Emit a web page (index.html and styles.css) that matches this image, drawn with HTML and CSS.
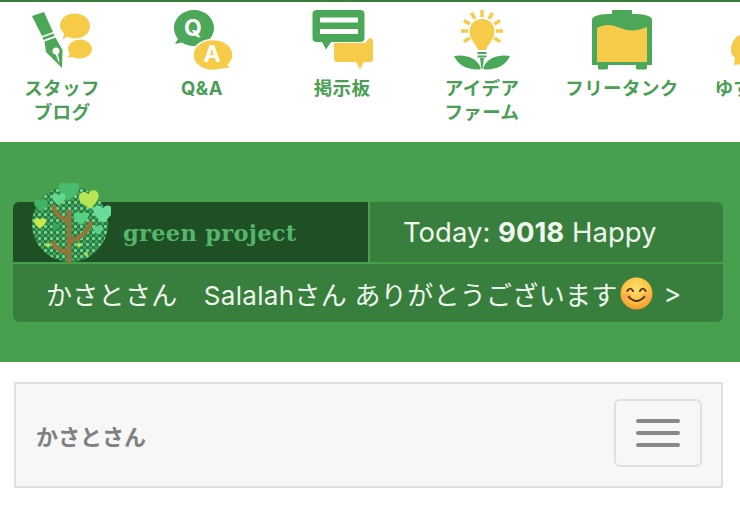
FILE: index.html
```html
<!DOCTYPE html>
<html lang="ja">

<head>
    <meta charset="UTF-8">
    <meta name="viewport" content="width=device-width, initial-scale=1.0">
    <title>green project</title>

    <link rel="stylesheet" href="styles.css">
</head>

<body>
    <nav class="menu">
        <a class="menu-item">
            <svg class="menu-icon" viewBox="22 8 80 64">
                <path class="green" d="M32 16 44 12 53 32 42 36Z" />
                <path class="green" d="M42.500 37.500 53.500 33.500 54.500 36 43.500 40Z" />
                <path class="green" d="M44.500 41.500 55.500 37.500 62.500 50 62 68 46 52Z" />
                <path class="white" d="M58.500 62 55.500 53.500 57.500 52.800 59.500 61.600Z" />
                <circle class="white" cx="56" cy="51" r="3.500" />
                <path class="yellow" d="M60 26C60 18 67 13.500 75 13.500S90 18.500 90 26 83 38.500 75 38.500C71 38.500 68.500 37.500 67 36.500L63 39.500 64 33C61.500 31 60 28.500 60 26Z" />
                <path class="yellow" d="M68 49C68 44 73.500 39.500 80 39.500S92 44 92 49 86.500 58.500 80 58.500C77 58.500 75 58 73.500 57L68 57.500 70 53.500C68.500 52 68 50.500 68 49Z" />
            </svg>
            <span class="menu-label">スタッフ<br>ブログ</span>
        </a>
        <a class="menu-item">
            <svg class="menu-icon" viewBox="161 8 80 64">
                <path class="green" d="M173 28C173 18 182 10 193 10S213 18 213 28 204 46 193 46C188 46 184 44.500 181 42.500L174 44 177 39C174.500 36 173 32 173 28Z" />
                <path class="yellow line" d="M192 55C192 46 201 39.500 212 39.500S232 46 232 55C232 59 230 62.500 227 65L231 68 219 69.500C217 70 214.500 70.500 212 70.500 201 70.500 192 64 192 55Z" />
                <text class="icon-letter" x="192" y="36">Q</text>
                <text class="icon-letter" x="211" y="62">A</text>
            </svg>
            <span class="menu-label">Q&amp;A</span>
        </a>
        <a class="menu-item">
            <svg class="menu-icon" viewBox="302 8 80 64">
                <path class="green" d="M317 10H360Q364.500 10 364.500 14V38Q364.500 42 360 42H331L326 49.500 322 42H317Q312.500 42 312.500 38V14Q312.500 10 317 10Z" />
                <rect class="white" x="320" y="17.500" width="38" height="5" />
                <rect class="white" x="320" y="29" width="38" height="5" />
                <path class="yellow" d="M334 43H365L369.500 38Q373 38 373 42V59Q373 62 370 62H364L360 69.500 356 62H337Q334 62 334 59Z" />
            </svg>
            <span class="menu-label">掲示板</span>
        </a>
        <a class="menu-item">
            <svg class="menu-icon" viewBox="442 8 80 64">
                <g class="rays">
                    <path d="M482 10V17" />
                    <path d="M482 10V17" transform="rotate(-30 482 31)" />
                    <path d="M482 10V17" transform="rotate(30 482 31)" />
                    <path d="M482 10V17" transform="rotate(-60 482 31)" />
                    <path d="M482 10V17" transform="rotate(60 482 31)" />
                    <path d="M482 10V17" transform="rotate(-90 482 31)" />
                    <path d="M482 10V17" transform="rotate(90 482 31)" />
                    <path d="M482 10V17" transform="rotate(-120 482 31)" />
                    <path d="M482 10V17" transform="rotate(120 482 31)" />
                </g>
                <path class="yellow" d="M478 50C477 45 469.500 40 469.500 31.500 469.500 24 475 19 482 19S494.500 24 494.500 31.500C494.500 40 487 45 486 50Z" />
                <rect class="green" x="477.500" y="52" width="9" height="2" />
                <rect class="green" x="477.500" y="55.500" width="9" height="2" />
                <path class="green" d="M454 56C464 54 476 57 480.500 67 481 68 480.500 69.500 479 69.500 467 70 458 65 454 56Z" />
                <path class="green" d="M510 56C500 54 488 57 483.500 67 483 68 483.500 69.500 485 69.500 497 70 506 65 510 56Z" />
                <path class="green" d="M480 58H484L482.500 69H481.500Z" />
            </svg>
            <span class="menu-label">アイデア<br>ファーム</span>
        </a>
        <a class="menu-item">
            <svg class="menu-icon" viewBox="582 8 80 64">
                <path class="green" d="M612 14V11Q612 10 613 10H631Q632 10 632 11V14C642 14 652 15 652 20V65H647V68Q647 69.500 645 69.500H638Q636 69.500 636 68V65H608V68Q608 69.500 606 69.500H600Q598 69.500 598 68V65H592V20C592 15 602 14 612 14Z" />
                <path class="yellow" d="M597 28C601 26 604 25 608 25 616 25 624 31 634 30.500 639 30 644 28 647 27V62H597Z" />
            </svg>
            <span class="menu-label">フリータンク</span>
        </a>
        <a class="menu-item">
            <svg class="menu-icon" viewBox="722 8 80 64">
                <path class="yellow" d="M731 50C731 40 738 33 748 33V47C743 47 740 50 741 64L734 65 735 58C732.500 56 731 53 731 50Z" />
            </svg>
            <span class="menu-label">ゆずりあい</span>
        </a>
    </nav>

    <section class="band">
        <div class="panel">
            <div class="panel-top">
                <div class="brand">
                    <svg class="tree" viewBox="-1 0 80 81">
                        <defs>
                            <pattern id="leaves" width="6" height="6" patternUnits="userSpaceOnUse">
                                <circle cx="1.500" cy="1.500" r="1.700" fill="#6fd48c" />
                                <circle cx="4.500" cy="4.500" r="1.500" fill="#43ad63" />
                            </pattern>
                            <path id="heart" d="M0-3C2-7 8-6 8-1 8 3 3 6 0 9-3 6-8 3-8-1-8-6-2-7 0-3Z" />
                        </defs>
                        <circle cx="38" cy="41" r="38" fill="#2a7a42" />
                        <circle cx="38" cy="41" r="38" fill="url(#leaves)" />
                        <path class="trunk" d="M37 80V27M37 70C29 68 23 66 21 58M37 58C48 56 57 48 59 38M37 38C29 36 22 30 21 22" />
                        <use href="#heart" fill="#48bc6c" transform="translate(37 6) scale(1.300)" />
                        <use href="#heart" fill="#62d88c" transform="translate(27 15) scale(0.850)" />
                        <use href="#heart" fill="#3fb562" transform="translate(9 21) scale(0.850)" />
                        <use href="#heart" fill="#b9e454" transform="translate(57 15) scale(1.250) rotate(-10)" />
                        <use href="#heart" fill="#68dc9c" transform="translate(71 29) scale(1.200)" />
                        <use href="#heart" fill="#56d085" transform="translate(49 34) scale(0.900)" />
                        <use href="#heart" fill="#c9e84e" transform="translate(8 39) scale(0.750)" />
                        <use href="#heart" fill="#5ad08c" transform="translate(66 46) scale(0.650)" />
                        <use href="#heart" fill="#36a25a" transform="translate(24 43) scale(0.500)" />
                        <circle cx="16" cy="62" r="2" fill="#c4e448" />
                        <circle cx="47" cy="62" r="2" fill="#c4e448" />
                        <circle cx="54" cy="71" r="2" fill="#a6dd55" />
                    </svg>
                    <span class="brand-name">green project</span>
                </div>
                <p class="today">Today: <b>9018</b> Happy</p>
            </div>
            <div class="panel-bottom">
                <span class="thanks">かさとさん　Salalahさん ありがとうございます</span>
                <svg class="smile" viewBox="0 0 34 34">
                    <defs>
                        <radialGradient id="face" cx="50%" cy="35%" r="65%">
                            <stop offset="0" stop-color="#ffe070" />
                            <stop offset="0.6" stop-color="#fdc445" />
                            <stop offset="1" stop-color="#f39a2c" />
                        </radialGradient>
                    </defs>
                    <circle cx="17" cy="17" r="16.500" fill="url(#face)" />
                    <ellipse cx="7.500" cy="20" rx="4.500" ry="3" fill="#f59a60" opacity="0.6" />
                    <ellipse cx="26.500" cy="20" rx="4.500" ry="3" fill="#f59a60" opacity="0.6" />
                    <path class="smile-line" d="M7.500 14.500Q10.500 9.500 13.500 14.500M20.500 14.500Q23.500 9.500 26.500 14.500" />
                    <path class="smile-line" d="M9 20.500Q17 29 25 20.500" />
                </svg>
                <span class="arrow">&gt;</span>
            </div>
        </div>
    </section>

    <section class="navbar">
        <span class="navbar-name">かさとさん</span>
        <button class="toggler">
            <span class="bar"></span>
            <span class="bar"></span>
            <span class="bar"></span>
        </button>
    </section>
</body>

</html>
```
FILE: styles.css
```css
* {
    box-sizing: border-box;
    margin: 0;
    padding: 0;
}

body {
    background: #fff;
    font-family: Inter, "Noto Sans CJK JP", sans-serif;
    width: 740px;
    height: 512px;
    overflow: hidden;
}

.menu {
    display: flex;
    height: 142px;
    border-top: 2px solid #3b7d3f;
    margin-left: -8px;
    padding-top: 6px;
}

.menu-item {
    flex: 0 0 140px;
    display: flex;
    flex-flow: column;
    align-items: center;
}

.menu-icon {
    width: 80px;
    height: 64px;
    flex: none;
}

.menu-label {
    margin-top: 4px;
    width: 140px;
    text-align: center;
    color: #4a9e55;
    font-size: 18.500px;
    font-weight: 700;
    line-height: 24px;
    letter-spacing: 0.400px;
    white-space: nowrap;
}

.green {
    fill: #4aa858;
}

.yellow {
    fill: #f5cb47;
}

.white {
    fill: #fff;
}

.line {
    stroke: #fff;
    stroke-width: 1.500;
}

.rays {
    stroke: #f5cb47;
    stroke-width: 3.500;
}

.icon-letter {
    fill: #fff;
    font-size: 23px;
    font-weight: 700;
    text-anchor: middle;
}

.band {
    height: 220px;
    background: #46a04d;
    padding: 60px 17px 40px 13px;
}

.panel {
    height: 120px;
    background: #387e3d;
    border-radius: 6px;
    color: #eef6ee;
}

.panel-top {
    display: flex;
    height: 60px;
}

.brand {
    position: relative;
    width: 357px;
    background: #1f4f24;
    border-right: 2px solid #46a04d;
    border-radius: 6px 0 0 0;
    padding: 17px 0 0 110px;
}

.tree {
    position: absolute;
    left: 18px;
    top: -19px;
    width: 80px;
    height: 81px;
}

.trunk {
    fill: none;
    stroke: #97743a;
    stroke-width: 4.500;
}

.brand-name {
    color: #55b56c;
    font-family: "DejaVu Serif", serif;
    font-size: 22.500px;
    font-weight: 700;
    line-height: 28px;
    letter-spacing: 0.300px;
    white-space: nowrap;
}

.today {
    padding-left: 33px;
    font-size: 27.500px;
    line-height: 60px;
    white-space: nowrap;
}

.panel-bottom {
    display: flex;
    align-items: center;
    height: 60px;
    border-top: 2px solid #46a04d;
    padding-left: 33px;
    font-size: 26px;
    white-space: nowrap;
}

.thanks {
    letter-spacing: 0.300px;
}

.smile {
    width: 33px;
    height: 33px;
    margin-left: 2px;
    flex: none;
}

.smile-line {
    fill: none;
    stroke: #5a3318;
    stroke-width: 2;
    stroke-linecap: round;
}

.arrow {
    margin-left: 11px;
    font-size: 27px;
}

.navbar {
    display: flex;
    justify-content: space-between;
    align-items: center;
    width: 709px;
    height: 106px;
    margin: 20px 0 0 14px;
    padding: 0 20px;
    background: #f7f7f7;
    border: 2px solid #e0e0e0;
}

.navbar-name {
    color: #808080;
    font-size: 22px;
    font-weight: 700;
}

.toggler {
    display: flex;
    flex-flow: column;
    align-items: center;
    justify-content: center;
    gap: 8px;
    width: 88px;
    height: 68px;
    margin: 0 -1px 4px 0;
    background: transparent;
    border: 2px solid #e0e0e0;
    border-radius: 6px;
}

.bar {
    width: 44px;
    height: 4px;
    border-radius: 2px;
    background: #888;
}
```
